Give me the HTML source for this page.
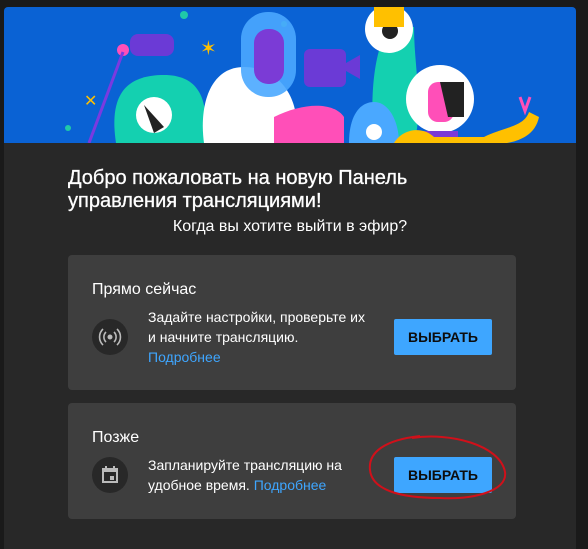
<!DOCTYPE html>
<html><head><meta charset="utf-8"><style>
body{margin:0;width:588px;height:549px;background:#1a1a1a;overflow:hidden;font-family:"Liberation Sans",Roboto,sans-serif;position:relative}
.dlg{position:absolute;left:4px;top:7px;width:572px;height:542px;background:#282828;border-radius:4px 4px 0 0;overflow:hidden}
.ban{position:absolute;left:0;top:0;width:572px;height:136px;background:#0a62d4}
h1{position:absolute;left:64px;top:160px;margin:0;font-size:20px;font-weight:normal;color:#fff;line-height:23px;-webkit-text-stroke:0.3px #fff}
.sub{position:absolute;left:0;width:572px;top:211px;text-align:center;color:#fff;font-size:16px;padding-left:0}
.card{position:absolute;left:64px;width:448px;background:#3e3e3e;border-radius:4px}
.t{position:absolute;left:24px;font-size:16px;color:#fff}
.ic{position:absolute;left:24px;width:36px;height:36px;border-radius:50%;background:#282828}
.d{position:absolute;left:80px;font-size:14px;color:#fff;line-height:20px}
.d a{color:#3ea6ff;text-decoration:none}
.b{position:absolute;left:326px;width:98px;height:36px;background:#3ea6ff;color:#0d0d0d;font-size:14px;font-weight:bold;text-align:center;line-height:36px;border-radius:2px}
</style></head><body>
<div class="dlg">
<div class="ban">
<svg width="572" height="136">
<circle cx="180" cy="8" r="4" fill="#20c9a8"/><circle cx="280" cy="17" r="3" fill="#20c9a8"/><circle cx="64" cy="121" r="3" fill="#20c9a8"/>
<rect x="126" y="27" width="44" height="22" rx="8" fill="#6b3ad6"/>
<circle cx="119" cy="43" r="6" fill="#ff4fb8"/><line x1="119" y1="45" x2="85" y2="136" stroke="#7a3ae0" stroke-width="3"/>
<text x="196" y="48" fill="#ffc000" font-size="20">✶</text><text x="80" y="99" fill="#ffc000" font-size="16">✕</text>
<path d="M112 136 C105 90 120 68 160 68 C200 68 205 100 200 136Z" fill="#14d0b0"/>
<circle cx="150" cy="108" r="18" fill="#fff"/><path d="M140 98 L160 120 L150 126 Z" fill="#222"/>
<path d="M200 136 C195 100 205 60 240 60 C280 60 300 100 290 136Z" fill="#fff"/>
<rect x="237" y="5" width="55" height="85" rx="27" fill="#4aa8ff" opacity=".9"/>
<rect x="250" y="22" width="30" height="55" rx="14" fill="#7b3bd6"/>
<path d="M270 110 C300 95 330 95 340 110 L340 136 L270 136Z" fill="#ff4fb8"/>
<rect x="300" y="42" width="42" height="38" rx="6" fill="#6b3ad6"/><path d="M342 56 L356 48 L356 72 L342 64Z" fill="#6b3ad6"/>
<path d="M370 136 C365 80 372 40 385 20 L410 20 C410 60 420 100 410 136Z" fill="#14d0b0"/>
<circle cx="385" cy="22" r="24" fill="#fff"/><circle cx="386" cy="24" r="8" fill="#222"/><rect x="370" y="0" width="30" height="20" fill="#ffc000"/>
<path d="M345 136 C345 110 355 95 370 95 C385 95 395 115 395 136Z" fill="#4aa8ff"/><circle cx="370" cy="125" r="8" fill="#fff"/>
<circle cx="436" cy="92" r="34" fill="#fff"/><rect x="424" y="75" width="26" height="40" rx="10" fill="#ff4fb8"/><path d="M436 75 L460 75 L460 110 L444 110Z" fill="#222"/>
<rect x="418" y="124" width="36" height="16" fill="#7b3bd6"/>
<path d="M390 136 C400 120 420 120 430 130 L480 130 C500 120 520 120 525 105 L535 110 C530 135 500 140 470 136Z" fill="#ffc000"/>
<path d="M516 90 L521 104 L526 90" stroke="#ff4fb8" stroke-width="3" fill="none"/>
</svg></div>
<h1>Добро пожаловать на новую Панель<br>управления трансляциями!</h1>
<div class="sub">Когда вы хотите выйти в эфир?</div>
<div class="card" style="top:248px;height:135px">
<div class="t" style="top:26px">Прямо сейчас</div>
<div class="ic" style="top:64px"><svg width="36" height="36"><circle cx="18" cy="18" r="2.5" fill="#bbb"/><path d="M14 13a7 7 0 0 0 0 10M22 13a7 7 0 0 1 0 10M11 10a11 11 0 0 0 0 16M25 10a11 11 0 0 1 0 16" stroke="#bbb" stroke-width="1.6" fill="none"/></svg></div>
<div class="d" style="top:52px">Задайте настройки, проверьте их<br>и начните трансляцию.<br><a>Подробнее</a></div>
<div class="b" style="top:64px">ВЫБРАТЬ</div>
</div>
<div class="card" style="top:396px;height:116px">
<div class="t" style="top:26px">Позже</div>
<div class="ic" style="top:54px"><svg width="36" height="36"><rect x="11" y="12" width="14" height="13" fill="none" stroke="#bbb" stroke-width="2"/><rect x="11" y="12" width="14" height="3" fill="#bbb"/><rect x="18" y="19" width="4" height="4" fill="#bbb"/><rect x="13" y="9" width="2" height="3" fill="#bbb"/><rect x="21" y="9" width="2" height="3" fill="#bbb"/></svg></div>
<div class="d" style="top:52px">Запланируйте трансляцию на<br>удобное время. <a>Подробнее</a></div>
<div class="b" style="top:54px">ВЫБРАТЬ</div>
</div>
</div>
<svg style="position:absolute;left:0;top:0" width="588" height="549"><path d="M412 438 C450 432 500 445 505 472 C508 492 470 500 440 498 C400 498 372 490 370 470 C368 452 385 440 420 436" stroke="#d0101a" stroke-width="2" fill="none"/></svg>
</body></html>
